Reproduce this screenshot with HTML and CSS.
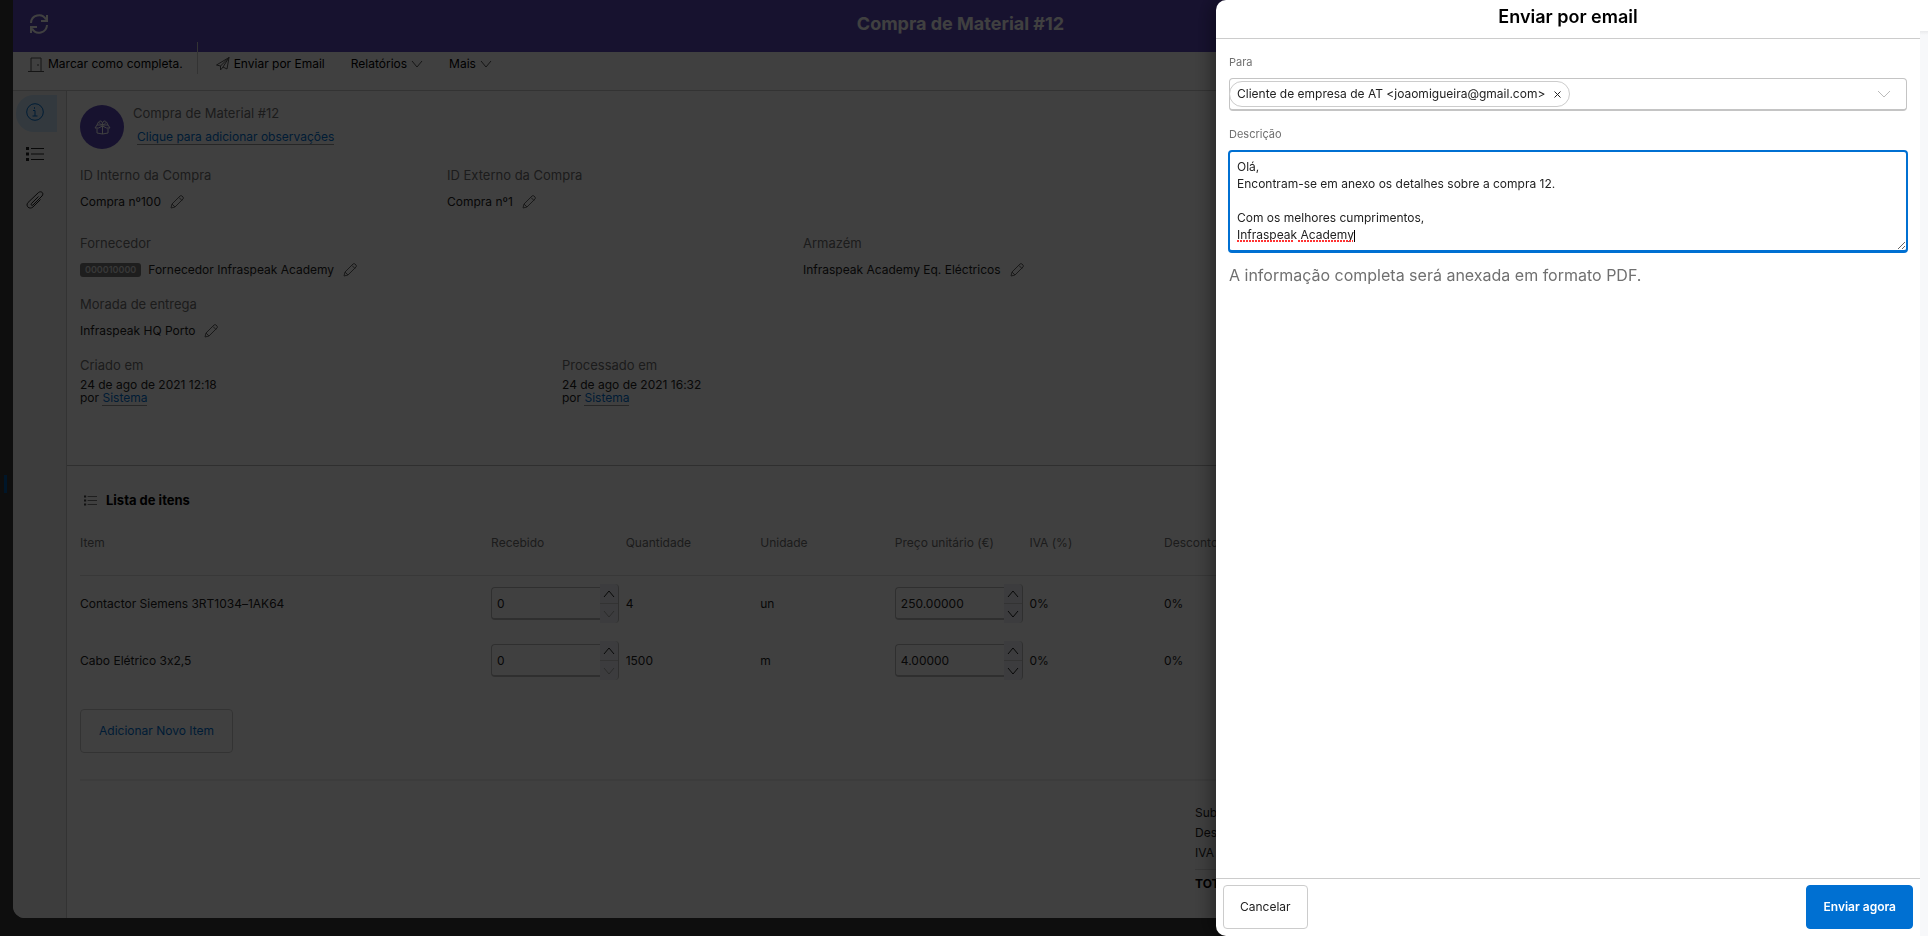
FILE: index.html
```html
<!DOCTYPE html>
<html lang="pt">
<head>
	<meta charset="utf-8">
	<title>Compra de Material #12</title>
	<link rel="stylesheet" href="styles.css">
</head>
<body>
	<!-- icons -->
	<svg class="defs" width="0" height="0">
		<symbol id="pencil" viewBox="0 0 14 14"><path d="M1 13l1-4 8-8q1-.8 2 0l1 1q.8 1 0 2l-8 8zM2 9l3 3M9 2.500l3 3"/></symbol>
		<symbol id="down" viewBox="0 0 12 8"><path d="M1 1l5 6 5-6"/></symbol>
		<symbol id="up" viewBox="0 0 12 8"><path d="M1 7l5-6 5 6"/></symbol>
		<symbol id="list" viewBox="0 0 18 14"><path d="M5 1.500h13M5 7h13M5 12.500h13"/><path class="dots" d="M0 0h3v3h-3zM0 5.500h3v3h-3zM0 11h3v3h-3z"/></symbol>
	</svg>

	<div class="page">
		<main class="window">
			<header class="topbar">
				<button class="refresh" aria-label="Atualizar">
					<svg width="20" height="20" viewBox="0 0 20 20"><path d="M2 9a8 8 0 0 1 15-3.500M18 1v6h-6M18 11a8 8 0 0 1-15 3.500M2 19v-6h6"/></svg>
				</button>
				<h1>Compra de Material #12</h1>
			</header>

			<nav class="toolbar">
				<button class="tool complete"><svg width="16" height="15" viewBox="0 0 16 15"><path d="M0 14.500h16M3 14V1h10v13"/><path d="M10 7v2"/></svg>Marcar como completa.</button>
				<button class="tool"><svg width="14" height="14" viewBox="0 0 14 14"><path d="M.5 8L13 .5 11 12l-4-2-2.500 3V9zM4.500 9L13 .5 7 10"/></svg>Enviar por Email</button>
				<button class="tool menu">Relatórios<svg width="12" height="8"><use href="#down"/></svg></button>
				<button class="tool menu">Mais<svg width="12" height="8"><use href="#down"/></svg></button>
			</nav>

			<div class="main">
				<aside class="tabs">
					<button class="tab active" aria-label="Informação"><svg width="18" height="18" viewBox="0 0 18 18"><circle cx="9" cy="9" r="8.300"/><path d="M7 7.500h2v5.500M6.500 13h5M8.500 4.200v1.600"/></svg></button>
					<button class="tab" aria-label="Itens"><svg width="18" height="14"><use href="#list"/></svg></button>
					<button class="tab" aria-label="Anexos"><svg width="18" height="18" viewBox="0 0 18 18"><path d="M12.500 5.500l-7 7c-1 1.500.5 2.500 1.500 1.500l9-9c2.500-3-1-5.500-3.500-3.500L2 11.500c-3 3.500 1.500 7.500 5 4.500l7.500-7.500"/></svg></button>
				</aside>

				<div class="content">
					<section class="details">
						<div class="heading">
							<span class="avatar"><svg width="17" height="15" viewBox="0 0 17 15"><path d="M3 5h11l2 3h-3.500L8.500 6l-4 2H1zM3 8.500V13l5.500 1 5.500-1V8.500M8.500 6v8M8.500 5C5 4 4 1.500 6 1s2.500 2 2.500 4c0-2 .5-4.500 2.500-4s1 3-2.500 4M3 5l1.500-3M14 5l-1.500-3"/></svg></span>
							<div>
								<h2>Compra de Material #12</h2>
								<a class="note" href="#">Clique para adicionar observações</a>
							</div>
						</div>

						<div class="row ids">
							<div class="field">
								<h3>ID Interno da Compra</h3>
								<p>Compra nº100 <svg class="pencil" width="14" height="14"><use href="#pencil"/></svg></p>
							</div>
							<div class="field">
								<h3>ID Externo da Compra</h3>
								<p>Compra nº1 <svg class="pencil" width="14" height="14"><use href="#pencil"/></svg></p>
							</div>
						</div>

						<div class="row places">
							<div class="field">
								<h3>Fornecedor</h3>
								<p><span class="badge">000010000</span>Fornecedor Infraspeak Academy <svg class="pencil" width="14" height="14"><use href="#pencil"/></svg></p>
							</div>
							<div class="field">
								<h3>Armazém</h3>
								<p>Infraspeak Academy Eq. Eléctricos <svg class="pencil" width="14" height="14"><use href="#pencil"/></svg></p>
							</div>
						</div>

						<div class="row">
							<div class="field">
								<h3>Morada de entrega</h3>
								<p>Infraspeak HQ Porto <svg class="pencil" width="14" height="14"><use href="#pencil"/></svg></p>
							</div>
						</div>

						<div class="row dates">
							<div class="stamp">
								<h3>Criado em</h3>
								<p>24 de ago de 2021 12:18<br>por <a href="#">Sistema</a></p>
							</div>
							<div class="stamp">
								<h3>Processado em</h3>
								<p>24 de ago de 2021 16:32<br>por <a href="#">Sistema</a></p>
							</div>
						</div>
					</section>

					<section class="items">
						<h2><svg width="13" height="11"><use href="#list"/></svg>Lista de itens</h2>
						<table>
							<thead>
								<tr>
									<th class="item">Item</th>
									<th>Recebido</th>
									<th>Quantidade</th>
									<th>Unidade</th>
									<th>Preço unitário (€)</th>
									<th>IVA (%)</th>
									<th>Desconto</th>
									<th class="rest"></th>
								</tr>
							</thead>
							<tbody>
								<tr>
									<td>Contactor Siemens 3RT1034–1AK64</td>
									<td><div class="number"><input type="text" value="0" aria-label="Recebido"><span class="spin"><button aria-label="Mais"><svg width="12" height="8"><use href="#up"/></svg></button><button class="off" aria-label="Menos"><svg width="12" height="8"><use href="#down"/></svg></button></span></div></td>
									<td>4</td>
									<td>un</td>
									<td><div class="number"><input type="text" value="250.00000" aria-label="Preço unitário"><span class="spin"><button aria-label="Mais"><svg width="12" height="8"><use href="#up"/></svg></button><button aria-label="Menos"><svg width="12" height="8"><use href="#down"/></svg></button></span></div></td>
									<td>0%</td>
									<td>0%</td>
									<td></td>
								</tr>
								<tr>
									<td>Cabo Elétrico 3x2,5</td>
									<td><div class="number"><input type="text" value="0" aria-label="Recebido"><span class="spin"><button aria-label="Mais"><svg width="12" height="8"><use href="#up"/></svg></button><button class="off" aria-label="Menos"><svg width="12" height="8"><use href="#down"/></svg></button></span></div></td>
									<td>1500</td>
									<td>m</td>
									<td><div class="number"><input type="text" value="4.00000" aria-label="Preço unitário"><span class="spin"><button aria-label="Mais"><svg width="12" height="8"><use href="#up"/></svg></button><button aria-label="Menos"><svg width="12" height="8"><use href="#down"/></svg></button></span></div></td>
									<td>0%</td>
									<td>0%</td>
									<td></td>
								</tr>
							</tbody>
						</table>
						<button class="btn add">Adicionar Novo Item</button>
						<div class="totals">
							<ul>
								<li>Subtotal</li>
								<li>Desconto</li>
								<li>IVA</li>
								<li class="total">TOTAL</li>
							</ul>
						</div>
					</section>
				</div>
			</div>
		</main>
	</div>

	<div class="backdrop"></div>
	<div class="rail"></div>
	<div class="edge"></div>

	<form class="drawer">
		<h2>Enviar por email</h2>
		<div class="fields">
			<label for="to">Para</label>
			<div class="select">
				<span class="chip">Cliente de empresa de AT &lt;joaomigueira@gmail.com&gt;<button type="button" aria-label="Remover"><svg width="7" height="7" viewBox="0 0 7 7"><path d="M.5.5l6 6M6.500.5l-6 6"/></svg></button></span>
				<input id="to" type="text">
				<svg class="arrow" width="14" height="8" viewBox="0 0 14 8"><path d="M1 1l6 6 6-6"/></svg>
			</div>
			<label for="desc">Descrição</label>
			<div class="editor">
				<textarea id="desc" rows="5" spellcheck="false">Olá,
Encontram-se em anexo os detalhes sobre a compra 12.

Com os melhores cumprimentos,
Infraspeak Academy</textarea>
				<!-- spelling marks and caret over the last line -->
				<div class="marks"><i class="first"></i><i class="second"></i><b></b></div>
			</div>
			<p>A informação completa será anexada em formato PDF.</p>
		</div>
		<footer>
			<button type="button" class="btn">Cancelar</button>
			<button type="button" class="btn primary">Enviar agora</button>
		</footer>
	</form>
</body>
</html>
```
FILE: styles.css
```css
* {
	box-sizing: border-box;
	margin: 0;
	padding: 0;
}

body {
	min-height: 100vh;
	font: 12px/16px Inter, "Open Sans", sans-serif;
	font-feature-settings: "calt" 0;
	color: #222;
	background: #393939;
	overflow: hidden;
}

button, input, textarea {
	font: inherit;
	color: inherit;
}

button {
	background: none;
	border: 0;
}

svg {
	fill: none;
	stroke: currentColor;
	flex: none;
}

.dots {
	fill: currentColor;
	stroke: none;
}

.defs {
	position: absolute;
}

a {
	color: #0070d2;
	text-decoration: none;
	border-bottom: 1px solid #999;
}

/* window */
.page {
	height: 100vh;
	padding: 0 20px 18px 13px;
}

.window {
	display: flex;
	flex-direction: column;
	height: 100%;
	background: #fff;
	border-radius: 0 0 12px 12px;
	overflow: hidden;
}

.topbar {
	display: flex;
	align-items: center;
	height: 52px;
	flex: none;
	padding: 0 16px 4px;
	color: #fff;
	background: #5c48bc;
}

.topbar h1 {
	flex: 1;
	text-align: center;
	font-size: 18px;
	line-height: 24px;
	padding-right: 20px;
}

.refresh {
	width: 20px;
	height: 20px;
}

.refresh svg {
	display: block;
	stroke-width: 2;
}

.toolbar {
	display: flex;
	align-items: flex-start;
	height: 39px;
	flex: none;
	padding: 4px 15px;
	border-bottom: 1px solid #ccc;
}

.tool {
	display: flex;
	align-items: center;
	gap: 4px;
	margin-right: 26px;
	color: #000;
}

.tool svg {
	color: #555;
}

/* the divider reaches up into the title bar */
.tool.complete {
	height: 32px;
	margin: -14px 18px 0 0;
	padding: 12px 14px 0 0;
	border-right: 1px solid #ccc;
}

.main {
	display: flex;
	flex: 1;
}

.tabs {
	width: 54px;
	padding: 4px 9px 0 3px;
	background: #f4f4f4;
	border-right: 1px solid #ccc;
}

.tab {
	display: flex;
	justify-content: center;
	width: 41px;
	height: 37px;
	margin-bottom: 7px;
	padding: 8px 3px 0 0;
}

.tab.active {
	color: #0070d2;
	background: #c9e2f6;
	border-radius: 18px 0 0 18px;
}

.content {
	flex: 1;
}

/* details */
.details {
	height: 375px;
	padding: 13px 13px 0;
	border-bottom: 1px solid #bbb;
}

.heading {
	display: flex;
	gap: 9px;
	height: 62px;
}

.avatar {
	display: flex;
	align-items: center;
	justify-content: center;
	width: 44px;
	height: 44px;
	margin-top: 1px;
	color: #fff;
	background: #5c48bc;
	border-radius: 50%;
}

.heading h2, h3 {
	font-size: 13px;
	line-height: 18px;
	font-weight: 400;
	color: #707070;
}

.note {
	display: inline-block;
	margin: 8px 4px;
	line-height: 14px;
}

.row {
	display: grid;
}

.ids {
	grid-template-columns: 367fr 1448fr;
	margin-bottom: 7px;
}

.places {
	grid-template-columns: 723fr 1092fr;
}

.dates {
	grid-template-columns: 482fr 1333fr;
}

.field {
	height: 61px;
}

.field p {
	display: flex;
	align-items: center;
	height: 18px;
	margin-top: 9px;
}

.pencil {
	margin-left: 9px;
	color: #666;
}

.badge {
	margin-right: 7px;
	padding: 0 5px;
	font-size: 9px;
	line-height: 14px;
	font-weight: 600;
	color: #ddd;
	background: #777;
	border-radius: 3px;
}

.stamp p {
	line-height: 13px;
	margin-top: 4px;
}

/* items */
.items {
	padding: 25px 13px 0;
}

.items h2 {
	display: flex;
	align-items: center;
	gap: 9px;
	padding-left: 4px;
	font-size: 13px;
	line-height: 18px;
	color: #000;
}

.items h2 svg {
	color: #444;
}

table {
	width: 100%;
	margin-top: 3px;
	table-layout: fixed;
	border-collapse: collapse;
}

th, td {
	text-align: left;
	font-weight: 400;
	white-space: nowrap;
}

th {
	width: 7.415%;
	height: 63px;
	color: #707070;
}

.item {
	width: 22.65%;
}

.rest {
	width: auto;
}

thead tr {
	border-bottom: 1px solid #ddd;
}

td {
	height: 57px;
}

.number {
	display: flex;
	align-items: center;
	width: 128px;
	height: 39px;
}

.number input {
	width: 109px;
	height: 33px;
	padding: 0 5px;
	background: none;
	border: 1px solid #bbb;
	border-bottom-width: 2px;
	border-right: 0;
	border-radius: 4px 0 0 4px;
}

.spin {
	display: grid;
	width: 19px;
	height: 39px;
	background: #edf0f5;
	border-right: 1px solid #bbb;
	border-radius: 0 4px 4px 0;
}

.spin button + button {
	border-top: 1px solid #ccc;
}

.spin svg {
	display: block;
	margin: auto;
}

.spin .off {
	color: #aaa;
}

.btn {
	height: 44px;
	padding: 0 16px;
	border: 1px solid #ccc;
	border-radius: 4px;
}

.add {
	margin-top: 20px;
	padding: 0 18px;
	color: #0070d2;
}

.totals {
	display: flex;
	justify-content: flex-end;
	margin-top: 26px;
	padding-top: 22px;
	border-top: 2px solid #eee;
}

.totals ul {
	width: 700px;
	list-style: none;
	line-height: 20px;
}

.total {
	margin-top: 6px;
	padding-top: 4px;
	font-weight: 700;
	color: #000;
	border-top: 1px solid #ddd;
}

/* drawer */
.backdrop {
	position: fixed;
	inset: 0;
	background: rgba(0, 0, 0, .75);
}

.rail {
	position: fixed;
	top: 475px;
	left: 4px;
	width: 3px;
	height: 18px;
	background: #001629;
}

.edge {
	position: fixed;
	inset: 0 0 0 auto;
	width: 20px;
	background: linear-gradient(#fff 31px, #e9eaec 31px, #f7f8fa 35px);
}

.drawer {
	position: fixed;
	inset: 0 8px 0 auto;
	display: flex;
	flex-direction: column;
	width: 704px;
	background: #fff;
	border-radius: 10px 0 0 10px;
	box-shadow: -4px 0 20px rgba(0, 0, 0, .4);
	clip-path: inset(0 0 0 -30px);
}

.drawer h2 {
	height: 39px;
	text-align: center;
	font-size: 18px;
	font-weight: 600;
	line-height: 34px;
	color: #000;
	border-bottom: 1px solid #ccc;
}

.fields {
	flex: 1;
	padding: 15px 13px;
}

.fields label {
	display: block;
	font-size: 11px;
	color: #707070;
}

.select {
	display: flex;
	align-items: center;
	height: 33px;
	margin: 8px 0 15px;
	border: 1px solid #c4c4c4;
	border-bottom-width: 2px;
	border-radius: 4px;
}

.select input {
	flex: 1;
	min-width: 0;
	border: 0;
	outline: 0;
}

.chip {
	display: flex;
	align-items: center;
	gap: 9px;
	height: 26px;
	margin-left: -1px;
	padding: 0 8px 0 7px;
	border: 1px solid #ccc;
	border-radius: 13px;
}

.chip button {
	display: flex;
}

.arrow {
	margin-right: 15px;
	color: #bbb;
}

.editor {
	position: relative;
	margin: 8px -1px 12px;
}

.editor textarea {
	display: block;
	width: 100%;
	height: 103px;
	padding: 6px 7px;
	line-height: 17px;
	border: 2px solid #0070d2;
	border-bottom-width: 3px;
	border-radius: 4px;
	outline: 0;
	resize: vertical;
}

.marks {
	position: absolute;
	left: 9px;
	bottom: 11px;
	display: flex;
	align-items: flex-end;
	gap: 4px;
	pointer-events: none;
}

.marks i {
	height: 2px;
	background: repeating-linear-gradient(90deg, #f33 0 2px, transparent 2px 3px);
}

.marks .first {
	width: 57px;
}

.marks .second {
	width: 55px;
}

.marks b {
	width: 1px;
	height: 12px;
	margin-left: -3px;
	background: #000;
}

.fields p {
	font-size: 16px;
	line-height: 20px;
	color: #707070;
}

.drawer footer {
	display: flex;
	justify-content: space-between;
	padding: 6px 7px 7px;
	border-top: 1px solid #ccc;
}

.primary {
	color: #fff;
	font-weight: 600;
	background: #0070d2;
	border-color: #0070d2;
}
```
